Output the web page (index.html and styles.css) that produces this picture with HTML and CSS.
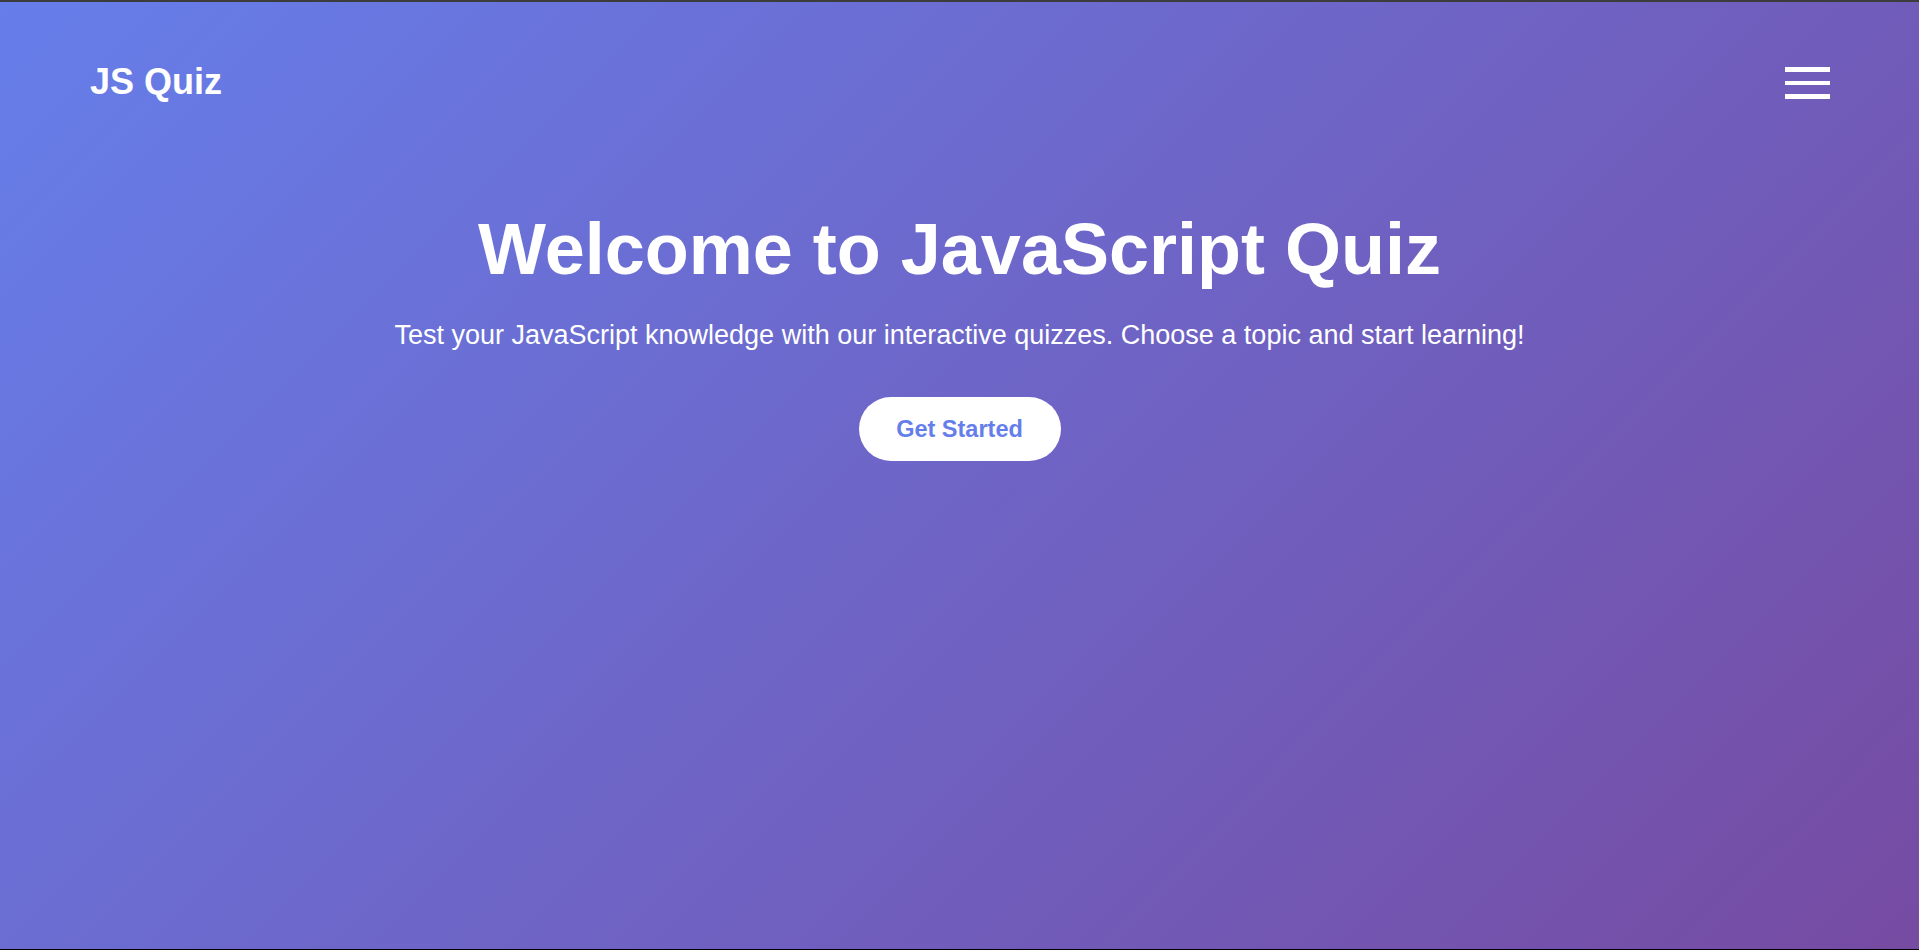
FILE: index.html
```html
<!DOCTYPE html>
<html lang="en">
<head>
<meta charset="utf-8">
<title>JS Quiz</title>
<link rel="stylesheet" href="styles.css">
</head>
<body>
<div class="page">
  <header class="header">
    <div class="logo">JS Quiz</div>
    <button class="menu-toggle" aria-label="Menu">
      <span class="bar"></span>
      <span class="bar"></span>
      <span class="bar"></span>
    </button>
  </header>
  <main class="hero">
    <h1 class="hero-title">Welcome to JavaScript Quiz</h1>
    <p class="hero-text">Test your JavaScript knowledge with our interactive quizzes. Choose a topic and start learning!</p>
    <button class="btn-start">Get Started</button>
  </main>
</div>
</body>
</html>
```

FILE: styles.css
```css
* {
  box-sizing: border-box;
}

html, body {
  margin: 0;
  padding: 0;
}

body {
  font-family: "Liberation Sans", Arial, sans-serif;
  color: #ffffff;
}

.page {
  min-height: 100vh;
  background: linear-gradient(135deg, #667eea 0%, #764ba2 100%);
  border-top: 2px solid #3c3c3c;
  border-bottom: 1px solid #000000;
  display: flex;
  flex-direction: column;
}

.header {
  display: flex;
  justify-content: space-between;
  align-items: flex-start;
  padding: 60px 89px 0 90px;
}

.logo {
  font-size: 36px;
  font-weight: 700;
  line-height: 39px;
}

.menu-toggle {
  background: none;
  border: 0;
  padding: 0;
  margin-top: 5px;
  width: 45px;
  display: flex;
  flex-direction: column;
  gap: 9px;
  cursor: pointer;
}

.bar {
  display: block;
  width: 45px;
  height: 4.5px;
  background: #ffffff;
}

.hero {
  text-align: center;
  padding-top: 105px;
  display: flex;
  flex-direction: column;
  align-items: center;
}

.hero-title {
  margin: 0;
  font-size: 72px;
  font-weight: 700;
  line-height: 1.2;
}

.hero-text {
  margin: 22.5px 0 0;
  font-size: 27px;
  line-height: 1.5;
}

.btn-start {
  margin-top: 42px;
  background: #ffffff;
  color: #667eea;
  border: 0;
  border-radius: 40px;
  font-family: "Liberation Sans", Arial, sans-serif;
  font-size: 23.5px;
  font-weight: 700;
  line-height: 27px;
  padding: 18.5px 37.5px;
  width: 202px;
  cursor: pointer;
}
```
